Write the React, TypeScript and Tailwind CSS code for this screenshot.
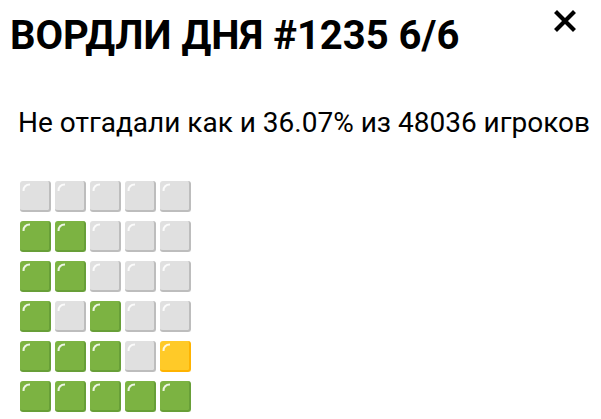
const rows = [
  'wwwww',
  'ggwww',
  'ggwww',
  'gwgww',
  'gggwy',
  'ggggg',
];

const tileStyles: Record<string, string> = {
  w: 'bg-[#e0e0e0] border-[#bdbdbd]',
  g: 'bg-[#7cb342] border-[#689f38]',
  y: 'bg-[#ffca28] border-[#ffb300]',
};

const Tile = ({ kind }: { kind: string }) => (
  <div
    className={`relative w-[31px] h-[31px] rounded-[3px] border-r-2 border-b-2 ${tileStyles[kind]}`}
  >
    <svg className="absolute left-[2px] top-[2px]" width="9" height="9" viewBox="0 0 9 9">
      <path d="M1.5 8 Q1.5 1.5 8 1.5" fill="none" stroke="white" strokeOpacity="0.85" strokeWidth="2" />
    </svg>
  </div>
);

const App = () => {
  return (
    <div className="w-[601px] h-[419px] bg-white overflow-hidden font-['Roboto',sans-serif] text-black relative">
      <div className="flex items-start justify-between pl-[10px] pr-[25px] pt-[12px]">
        <h1 className="text-[40px] leading-[48px] font-bold whitespace-nowrap">
          ВОРДЛИ ДНЯ #1235 6/6
        </h1>
        <button className="mt-[-2px]">
          <svg width="22" height="22" viewBox="0 0 22 22">
            <path d="M3 3 L19 19 M19 3 L3 19" stroke="black" strokeWidth="4.2" strokeLinecap="square" />
          </svg>
        </button>
      </div>
      <p className="pl-[18px] mt-[47px] text-[28px] leading-[32px] whitespace-nowrap">
        Не отгадали как и 36.07% из 48036 игроков
      </p>
      <div className="pl-[20px] mt-[42px] flex flex-col gap-[9px]">
        {rows.map((r, i) => (
          <div key={i} className="flex gap-[4px]">
            {r.split('').map((k, j) => (
              <Tile key={j} kind={k} />
            ))}
          </div>
        ))}
      </div>
    </div>
  );
};

export default App;
